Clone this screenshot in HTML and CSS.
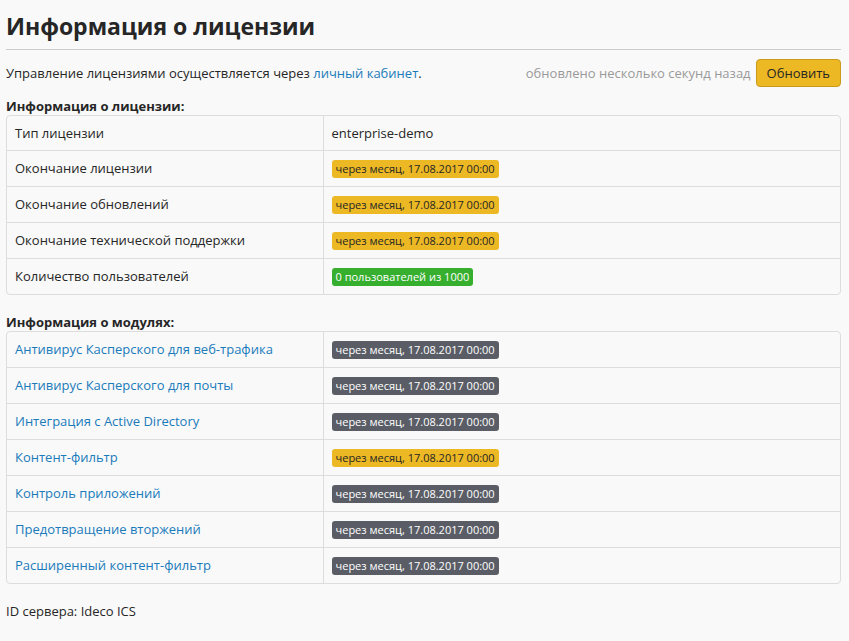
FILE: index.html
```html
<!DOCTYPE html>
<html lang="ru">
<head>
<meta charset="utf-8">
<meta name="viewport" content="width=device-width, initial-scale=1">
<title>Информация о лицензии</title>
<link rel="stylesheet" href="styles.css">
</head>
<body>
<main>
<h1>Информация о лицензии</h1>
<div class="toolbar">
<p>Управление лицензиями осуществляется через <a href="#">личный кабинет</a>.</p>
<div class="refresh"><span class="muted">обновлено несколько секунд назад</span><button type="button" class="btn">Обновить</button></div>
</div>
<table class="info">
<caption>Информация о лицензии:</caption>
<tbody>
<tr><th scope="row">Тип лицензии</th><td>enterprise-demo</td></tr>
<tr><th scope="row">Окончание лицензии</th><td><span class="label warning">через месяц, 17.08.2017 00:00</span></td></tr>
<tr><th scope="row">Окончание обновлений</th><td><span class="label warning">через месяц, 17.08.2017 00:00</span></td></tr>
<tr><th scope="row">Окончание технической поддержки</th><td><span class="label warning">через месяц, 17.08.2017 00:00</span></td></tr>
<tr><th scope="row">Количество пользователей</th><td><span class="label success">0 пользователей из 1000</span></td></tr>
</tbody>
</table>
<table class="info">
<caption>Информация о модулях:</caption>
<tbody>
<tr><th scope="row"><a href="#">Антивирус Касперского для веб-трафика</a></th><td><span class="label">через месяц, 17.08.2017 00:00</span></td></tr>
<tr><th scope="row"><a href="#">Антивирус Касперского для почты</a></th><td><span class="label">через месяц, 17.08.2017 00:00</span></td></tr>
<tr><th scope="row"><a href="#">Интеграция с Active Directory</a></th><td><span class="label">через месяц, 17.08.2017 00:00</span></td></tr>
<tr><th scope="row"><a href="#">Контент-фильтр</a></th><td><span class="label warning">через месяц, 17.08.2017 00:00</span></td></tr>
<tr><th scope="row"><a href="#">Контроль приложений</a></th><td><span class="label">через месяц, 17.08.2017 00:00</span></td></tr>
<tr><th scope="row"><a href="#">Предотвращение вторжений</a></th><td><span class="label">через месяц, 17.08.2017 00:00</span></td></tr>
<tr><th scope="row"><a href="#">Расширенный контент-фильтр</a></th><td><span class="label">через месяц, 17.08.2017 00:00</span></td></tr>
</tbody>
</table>
<p>ID сервера: Ideco ICS</p>
</main>
</body>
</html>
```
FILE: styles.css
```css
* {
  box-sizing: border-box;
}

body {
  margin: 0;
  background: #f9f9f9;
  color: #262626;
  font: 13px/20px "Open Sans", "Noto Sans", sans-serif;
}

main {
  padding: 6px 8px 20px 6px;
}

h1 {
  margin: 0 0 9px;
  padding-bottom: 3px;
  border-bottom: 1px solid #ccc;
  font-size: 23px;
  font-weight: 700;
  line-height: 40px;
}

p {
  margin: 0;
}

a {
  color: #1a7bbb;
  text-decoration: none;
}

.toolbar,
.refresh {
  display: flex;
  align-items: center;
}

.toolbar {
  justify-content: space-between;
  margin-bottom: 9px;
}

.refresh {
  gap: 5px;
}

.muted {
  color: #999;
}

.btn {
  height: 28px;
  padding: 0 10px;
  border: 1px solid #c99a1b;
  border-radius: 4px;
  background: #ecb824;
  color: #262626;
  font: inherit;
}

.info {
  width: 100%;
  margin-bottom: 17px;
  border: 1px solid #ddd;
  border-radius: 4px;
  border-collapse: separate;
  border-spacing: 0;
  table-layout: fixed;
}

.info caption {
  padding-top: 1px;
  font-weight: 700;
  line-height: 18px;
  text-align: left;
}

.info th,
.info td {
  padding: 7px 8px;
  font-weight: 400;
  text-align: left;
  vertical-align: top;
}

.info th {
  width: 38%;
  border-right: 1px solid #ddd;
}

.info tr + tr > * {
  border-top: 1px solid #ddd;
}

.label {
  display: inline-block;
  margin: 2px 0 1px;
  padding: 2px 4px;
  border-radius: 3px;
  background: #5a5d66;
  color: #fff;
  font-size: 11px;
  line-height: 14px;
  vertical-align: top;
}

.warning {
  background: #ecb824;
  color: #262626;
}

.success {
  background: #36ae2e;
}
```
